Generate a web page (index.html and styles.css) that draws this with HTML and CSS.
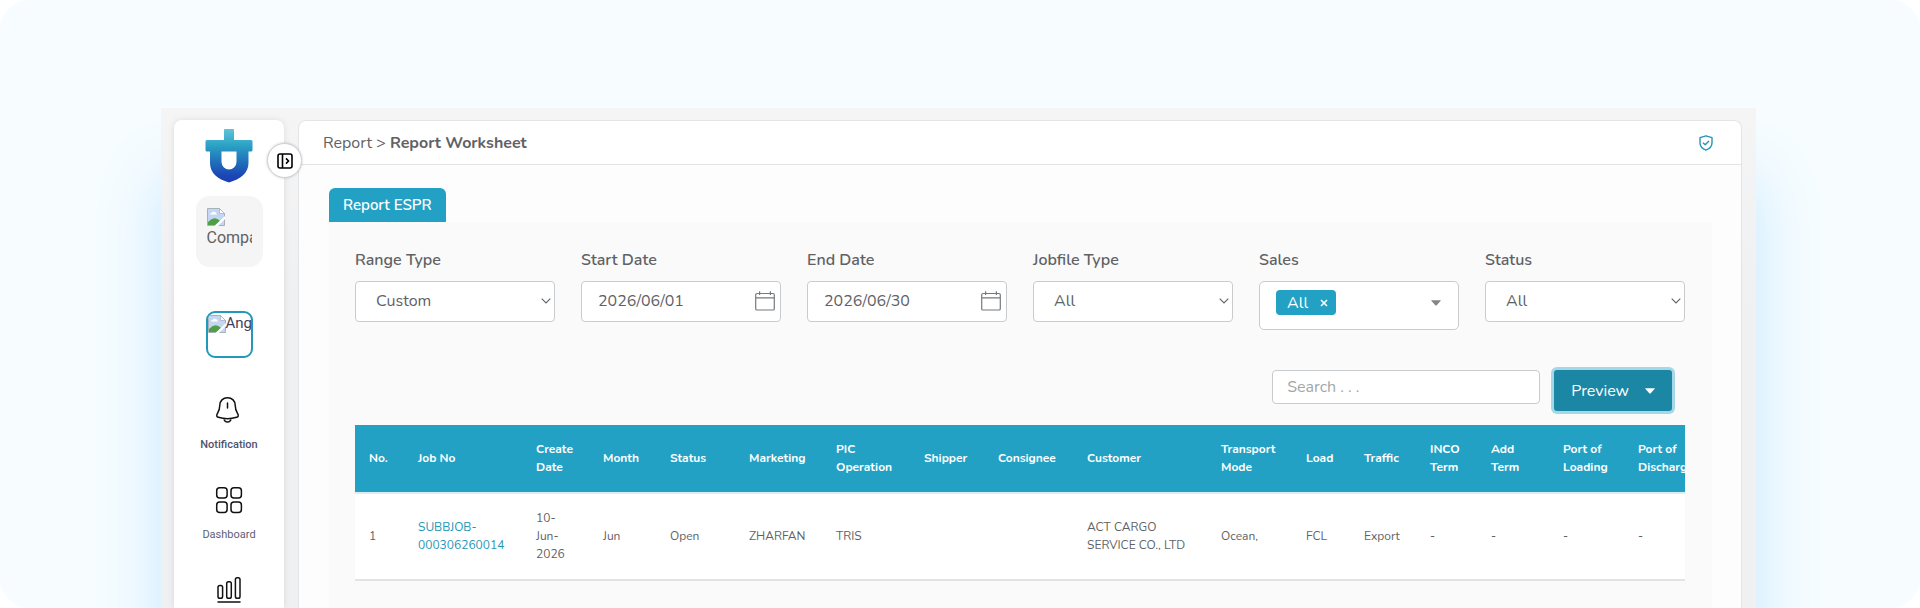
FILE: index.html
```html
<!DOCTYPE html>
<html lang="en">
<head>
	<meta charset="utf-8">
	<meta name="viewport" content="width=device-width, initial-scale=1">
	<title>Report Worksheet</title>
	<link rel="stylesheet" href="styles.css">
</head>
<body>
	<!-- shared icons -->
	<svg class="sprite" aria-hidden="true">
		<symbol id="chevron" viewBox="0 0 10 6"><path d="M.7.7 5 5 9.300.7" fill="none" stroke="#5f6368" stroke-width="1.100"/></symbol>
		<symbol id="caret" viewBox="0 0 10 6"><path d="M.4.3h9.200q.4.2.1.5L5.500 5.400q-.5.4-1 0L.3.8Q0 .4.400.3z" fill="currentColor"/></symbol>
		<symbol id="calendar" viewBox="0 0 20 20"><path d="M2 2.500h16q1.300 0 1.300 1.300v13.900q0 1.300-1.300 1.300H2q-1.300 0-1.300-1.300V3.800q0-1.300 1.300-1.300zM.7 6.900h18.600M4.600.3v3.600M15.400.3v3.600" fill="none" stroke="#77797c" stroke-width="1.200"/></symbol>
		<symbol id="broken" viewBox="0 0 18 18">
			<path d="M.5.5h12l5 5v12H.5z" fill="#c3d6f3" stroke="#a9b0ba"/>
			<path d="M3 6.500q0-1.800 2-1.800 1-1.700 2.700-.8 1.500.1 1.500 1.600.9.300.8 1z" fill="#fff"/>
			<path d="M1 17v-3q4-4.500 8-3.500 2.500.6 4 2.500L8.500 17z" fill="#4fa044"/>
			<path d="M12.500.5v5h5z" fill="#fff" stroke="#a9b0ba" stroke-width=".8"/>
			<path d="M18 8v3l-7 7H7.500z" fill="#fff"/>
		</symbol>
	</svg>

	<div class="stage">
		<div class="frame">
			<aside class="sidebar">
				<button class="toggle" aria-label="Expand menu">
					<svg width="16" height="16" viewBox="0 0 16 16" fill="none" stroke="#000" stroke-width="1.600"><rect x="1" y="1" width="14" height="14" rx="2"/><path d="M5.500 1v14M9 5.400 11.500 8 9 10.600"/></svg>
				</button>
				<svg class="logo" width="48" height="54" viewBox="0 0 48 54">
					<defs><linearGradient id="lg" x1="0" y1="0" x2="0" y2="1"><stop offset="0" stop-color="#5fc4d6"/><stop offset=".3" stop-color="#2ba3c6"/><stop offset=".65" stop-color="#1f6ab9"/><stop offset=".88" stop-color="#1b45b5"/><stop offset="1" stop-color="#1c3fb0"/></linearGradient></defs>
					<path fill="url(#lg)" fill-rule="evenodd" d="M20 0h8q1 0 1 1v10h17q1.500 0 1.500 1.500V21q0 1.500-1.500 1.500h-2.500V34c0 10-8 16-19.500 19.500C12.500 50 5 44 5 34V22.500H2Q.5 22.500.5 21v-8.500Q.5 11 2 11h17V1q0-1 1-1zM16.500 22.500V33a7.500 7.500 0 0 0 15 0V22.500z"/>
				</svg>
				<div class="company"><div class="clip"><svg width="18" height="18"><use href="#broken"/></svg>Company</div></div>
				<a class="avatar" href="#"><svg width="18" height="18"><use href="#broken"/></svg>Angga</a>
				<nav class="menu">
					<a class="active" href="#">
						<svg width="28" height="28" viewBox="0 0 28 28" fill="none" stroke="#111" stroke-width="1.500" stroke-linecap="round" stroke-linejoin="round"><path d="M12.500 1.700c-4.600 0-7.700 3.300-7.700 7.600 0 4.500-1 6-2.500 8.400-1 1.700-.6 3.100 1 3.600 6 1.900 12.400 1.900 18.400 0 1.600-.5 2-1.900 1-3.600-1.500-2.400-2.500-3.900-2.500-8.400 0-4.300-3.100-7.600-7.700-7.600zM8.800 22.700c1 4.400 6.400 4.400 7.400 0M12.500 6.900v5"/></svg>
						<span>Notification</span>
					</a>
					<a href="#">
						<svg width="28" height="28" viewBox="0 0 28 28" fill="none" stroke="#111" stroke-width="1.500"><rect x="1.700" y="1.700" width="10.400" height="10.400" rx="3"/><rect x="16" y="1.700" width="10.400" height="10.400" rx="3"/><rect x="1.700" y="16" width="10.400" height="10.400" rx="3"/><rect x="16" y="16" width="10.400" height="10.400" rx="3"/></svg>
						<span>Dashboard</span>
					</a>
					<a href="#" aria-label="Report">
						<svg width="28" height="28" viewBox="0 0 28 28" fill="none" stroke="#111" stroke-width="1.500" stroke-linecap="round"><rect x="3" y="9.500" width="4.600" height="12.800" rx="1.800"/><rect x="11.700" y="5.800" width="4.600" height="16.500" rx="1.800"/><rect x="20.400" y="1.800" width="4.600" height="20.500" rx="1.800"/><path d="M3 26h22"/></svg>
					</a>
				</nav>
			</aside>

			<main class="main">
				<header class="topbar">
					<h1>Report &gt; <b>Report Worksheet</b></h1>
					<svg width="14" height="16" viewBox="0 0 14 16" fill="none" stroke="#2595b5" stroke-width="1.400" stroke-linejoin="round"><path d="M7 .9 13 2.700v5.400c0 3.500-2.500 5.700-6 7-3.500-1.300-6-3.500-6-7V2.700zM4 7.700l2.200 2.100L10 6"/></svg>
				</header>
				<div class="content">
					<button class="tab">Report ESPR</button>
					<section class="panel">
						<div class="filters">
							<div class="field">
								<label for="range">Range Type</label>
								<div class="control"><select id="range"><option>Custom</option></select><svg class="chevron" width="10" height="6"><use href="#chevron"/></svg></div>
							</div>
							<div class="field">
								<label for="start">Start Date</label>
								<div class="control"><input id="start" type="text" value="2026/06/01"><svg class="calendar" width="20" height="20"><use href="#calendar"/></svg></div>
							</div>
							<div class="field">
								<label for="end">End Date</label>
								<div class="control"><input id="end" type="text" value="2026/06/30"><svg class="calendar" width="20" height="20"><use href="#calendar"/></svg></div>
							</div>
							<div class="field">
								<label for="jobfile">Jobfile Type</label>
								<div class="control"><select id="jobfile"><option>All</option></select><svg class="chevron" width="10" height="6"><use href="#chevron"/></svg></div>
							</div>
							<div class="field">
								<label for="sales">Sales</label>
								<div class="multi">
									<span class="tag">All <button aria-label="Remove All"><svg width="8" height="8" viewBox="0 0 8 8" stroke="#fff" stroke-width="1.600"><path d="m1 1 6 6M7 1 1 7"/></svg></button></span>
									<button id="sales" class="open" aria-label="Sales"><svg width="10" height="6"><use href="#caret"/></svg></button>
								</div>
							</div>
							<div class="field">
								<label for="status">Status</label>
								<div class="control"><select id="status"><option>All</option></select><svg class="chevron" width="10" height="6"><use href="#chevron"/></svg></div>
							</div>
						</div>

						<div class="toolbar">
							<input class="search" type="search" placeholder="Search . . ." aria-label="Search">
							<button class="preview">Preview <svg width="10" height="6"><use href="#caret"/></svg></button>
						</div>

						<div class="table-wrap">
							<table>
								<colgroup>
									<col class="w-no"><col class="w-job"><col class="w-date"><col class="w-month"><col class="w-status"><col class="w-mkt"><col class="w-pic"><col class="w-ship"><col class="w-cons"><col class="w-cust"><col class="w-mode"><col class="w-load"><col class="w-traffic"><col class="w-inco"><col class="w-add"><col class="w-pol"><col class="w-pod">
								</colgroup>
								<thead>
									<tr>
										<th>No.</th>
										<th>Job No</th>
										<th>Create Date</th>
										<th>Month</th>
										<th>Status</th>
										<th>Marketing</th>
										<th>PIC Operation</th>
										<th>Shipper</th>
										<th>Consignee</th>
										<th>Customer</th>
										<th>Transport Mode</th>
										<th>Load</th>
										<th>Traffic</th>
										<th>INCO Term</th>
										<th>Add Term</th>
										<th>Port of Loading</th>
										<th>Port of Discharge</th>
									</tr>
								</thead>
								<tbody>
									<tr>
										<td>1</td>
										<td><a href="#">SUBBJOB-<br>000306260014</a></td>
										<td>10-<br>Jun-<br>2026</td>
										<td>Jun</td>
										<td>Open</td>
										<td>ZHARFAN</td>
										<td>TRIS</td>
										<td></td>
										<td></td>
										<td>ACT CARGO<br>SERVICE CO., LTD</td>
										<td>Ocean,</td>
										<td>FCL</td>
										<td>Export</td>
										<td>-</td>
										<td>-</td>
										<td>-</td>
										<td>-</td>
									</tr>
								</tbody>
							</table>
						</div>
					</section>
				</div>
			</main>
		</div>
	</div>
</body>
</html>
```
FILE: styles.css
```css
* {
	box-sizing: border-box;
}
body {
	margin: 0;
	background: #fff;
	color: #5f6265;
	font-family: Nunito, Lato, "Open Sans", sans-serif;
	font-size: 16px;
}
button, input, select {
	font: inherit;
	color: inherit;
}
button {
	padding: 0;
	border: 0;
	background: none;
	cursor: pointer;
}
a {
	text-decoration: none;
}
svg {
	flex: none;
}
.sprite {
	position: absolute;
	width: 0;
	height: 0;
}

.stage {
	display: flex;
	height: 100vh;
	padding: 108px 164px 0 161px;
	overflow: hidden;
	border-radius: 30px;
	background: #f6fcff;
}
.frame {
	display: flex;
	flex: 1;
	min-width: 0;
	gap: 14px;
	padding: 12px 14px 0 13px;
	background: linear-gradient(#f5f5f6, #eff0f1 200px);
	box-shadow: 0 70px 60px #c8e8ff;
}

/* sidebar */
.sidebar {
	position: relative;
	display: flex;
	flex: none;
	flex-direction: column;
	align-items: center;
	width: 110px;
	padding-top: 9px;
	border-radius: 8px 8px 0 0;
	background: #fff;
	box-shadow: 0 0 6px rgba(0, 0, 0, .1);
	font-family: Roboto, sans-serif;
}
.toggle {
	position: absolute;
	top: 23px;
	right: -18px;
	display: flex;
	align-items: center;
	justify-content: center;
	width: 35px;
	height: 35px;
	border: 1px solid #cfcfd6;
	border-radius: 50%;
	background: #fff;
	box-shadow: 0 0 3px rgba(0, 0, 0, .2);
}
.company {
	flex: none;
	width: 67px;
	height: 71px;
	margin-top: 13px;
	padding: 12px 11px;
	border-radius: 14px;
	background: #f5f5f5;
	line-height: 24px;
}
.clip {
	overflow: hidden;
}
.clip svg {
	display: block;
}
.avatar {
	display: block;
	flex: none;
	width: 47px;
	height: 47px;
	margin-top: 44px;
	overflow: hidden;
	border: 2px solid #2299b8;
	border-radius: 9px;
	color: #3f3f5c;
	font-size: 15px;
	line-height: 20px;
	white-space: nowrap;
}
.avatar svg {
	vertical-align: middle;
}
.menu {
	display: flex;
	flex-direction: column;
	gap: 33px;
	margin-top: 38px;
}
.menu a {
	display: flex;
	flex-direction: column;
	align-items: center;
	gap: 13px;
	color: #5c5f76;
	font-size: 11px;
	line-height: 16px;
}
.menu .active {
	color: #50526f;
	font-weight: 500;
}

/* main card */
.main {
	flex: 1;
	min-width: 0;
	border: 1px solid #e3e4e5;
	border-bottom: 0;
	border-radius: 8px 8px 0 0;
	background: #fdfdfd;
}
.topbar {
	display: flex;
	align-items: center;
	justify-content: space-between;
	height: 44px;
	padding: 0 28px 0 24px;
	border-bottom: 1px solid #e3e4e5;
	border-radius: 8px 8px 0 0;
	background: #fff;
}
h1 {
	margin: 0;
	font-size: 16px;
	font-weight: 400;
}
h1 b {
	font-weight: 700;
}
.content {
	padding: 23px 29px 0 30px;
}
.tab {
	display: block;
	height: 34px;
	padding: 0 14px;
	border-radius: 6px 6px 0 0;
	background: #23a1c4;
	color: #fff;
	font-size: 15px;
	font-weight: 600;
}
.panel {
	height: 600px;
	padding: 27px 27px 0 26px;
	background: #fafafa;
}
.filters {
	display: grid;
	grid-template-columns: repeat(6, minmax(0, 1fr));
	gap: 26px;
	align-items: start;
}
.field label {
	display: block;
	margin-bottom: 10px;
	font-weight: 600;
	line-height: 22px;
}
.control {
	position: relative;
}
.control select, .control input {
	display: block;
	width: 100%;
	height: 41px;
	border: 1px solid #c9cccf;
	border-radius: 4px;
	background: #fff;
	appearance: none;
}
.control select {
	padding: 0 20px 2px;
}
.control input {
	padding: 0 40px 2px 16px;
}
.chevron, .calendar {
	position: absolute;
	pointer-events: none;
}
.chevron {
	top: 17px;
	right: 4px;
}
.calendar {
	top: 10px;
	right: 6px;
}
.multi {
	display: flex;
	align-items: flex-start;
	justify-content: space-between;
	height: 49px;
	padding: 8px 17px 0 16px;
	border: 1px solid #c9cccf;
	border-radius: 5px;
	background: #fff;
}
.tag {
	display: flex;
	align-items: center;
	gap: 12px;
	height: 25px;
	padding: 0 8px 0 11px;
	border-radius: 4px;
	background: #23a1c4;
	color: #fff;
}
.tag button, .open {
	display: flex;
	align-items: center;
}
.open {
	height: 25px;
	color: #858585;
}

.toolbar {
	display: flex;
	align-items: flex-start;
	justify-content: flex-end;
	gap: 14px;
	margin-top: 40px;
	padding-right: 13px;
}
.search {
	width: 268px;
	height: 34px;
	padding: 0 14px;
	border: 1px solid #c9cccf;
	border-radius: 4px;
	background: #fff;
}
.search::placeholder {
	color: #a3a6a9;
}
.preview {
	display: flex;
	align-items: center;
	gap: 16px;
	height: 41px;
	padding: 0 17px;
	border-radius: 3px;
	background: #1c87a5;
	box-shadow: 0 0 0 3px #a5d8e6;
	color: #fff;
}

/* report table */
.table-wrap {
	margin-top: 14px;
	overflow: hidden;
}
table {
	width: 1360px;
	table-layout: fixed;
	border-collapse: separate;
	border-spacing: 0;
	background: #fff;
	font-size: 12px;
	line-height: 18px;
}
th, td {
	padding: 0 14px 1px;
	text-align: left;
}
th {
	height: 69px;
	border-bottom: 2px solid #d8eef3;
	background: #23a1c4;
	color: #fff;
	font-weight: 700;
}
td {
	height: 87px;
	border-bottom: 2px solid #e1e4e4;
	white-space: nowrap;
}
td a {
	color: #2596b4;
}
.w-no { width: 49px; }
.w-job { width: 118px; }
.w-date { width: 67px; }
.w-month { width: 67px; }
.w-status { width: 79px; }
.w-mkt { width: 87px; }
.w-pic { width: 88px; }
.w-ship { width: 74px; }
.w-cons { width: 89px; }
.w-cust { width: 134px; }
.w-mode { width: 85px; }
.w-load { width: 58px; }
.w-traffic { width: 66px; }
.w-inco { width: 61px; }
.w-add { width: 72px; }
.w-pol { width: 75px; }
.w-pod { width: 91px; }
```
